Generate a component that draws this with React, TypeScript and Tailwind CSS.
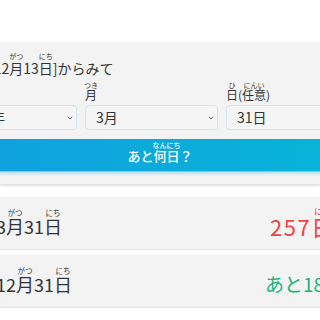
import React from "react";

function R({ base, rt, rtClass }: { base: string; rt: string; rtClass: string }) {
  return (
    <span className="relative inline-block">
      {base}
      <span className={rtClass}>{rt}</span>
    </span>
  );
}

function Chevron() {
  return (
    <svg width="6" height="4" viewBox="0 0 6 4" className="shrink-0">
      <path d="M0.8 0.8 L3 3 L5.2 0.8" fill="none" stroke="#666" strokeWidth="1" />
    </svg>
  );
}

const rtSmall =
  "absolute left-1/2 -translate-x-1/2 -top-[5px] text-[7px] leading-none whitespace-nowrap tracking-normal";
const rtLabel =
  "absolute left-1/2 -translate-x-1/2 -top-[4px] text-[7px] leading-none whitespace-nowrap";
const rtBtn =
  "absolute left-1/2 -translate-x-1/2 -top-[4px] text-[7px] leading-none whitespace-nowrap";
const rtCard =
  "absolute left-1/2 -translate-x-1/2 -top-[5px] text-[7.5px] leading-none whitespace-nowrap tracking-normal";
const rtRed =
  "absolute left-1/2 -translate-x-1/2 -top-[7px] text-[9px] leading-none whitespace-nowrap tracking-normal";

export default function App() {
  return (
    <div
      className="w-[320px] h-[320px] overflow-hidden bg-white text-[#333]"
      style={{ fontFamily: '"Noto Sans CJK JP", "Noto Sans", sans-serif' }}
    >
      <div className="h-[42px]" />
      <div className="bg-[#f3f3f3] border-b border-[#e3e3e3] shadow-[0_1px_2px_rgba(0,0,0,0.12)]">
        <div className="-ml-[49px] w-[418px] pt-[16px] pb-[12px]">
          <div className="pl-[38px] h-[20px] text-[14px] leading-[20px] whitespace-nowrap">
            [12
            <R base="月" rt="がつ" rtClass={rtSmall} />
            13
            <R base="日" rt="にち" rtClass={rtSmall} />
            ]からみて
          </div>
          <div className="mt-[7px] grid grid-cols-[126px_133px_143px] gap-x-2 gap-y-[2px]">
            <div className="h-[18px] pt-[1px] text-[12px] leading-[18px]">
              <R base="年" rt="ねん" rtClass={rtLabel} />
            </div>
            <div className="h-[18px] pt-[1px] text-[12px] leading-[18px]">
              <R base="月" rt="つき" rtClass={rtLabel} />
            </div>
            <div className="h-[18px] pt-[1px] text-[12px] leading-[18px] whitespace-nowrap">
              <R base="日" rt="ひ" rtClass={rtLabel} />(
              <R base="任意" rt="にんい" rtClass={rtLabel} />)
            </div>
            <div className="h-[25px] rounded-[4px] border border-[#cfe7f4] bg-[#f5f5f6] flex items-center justify-between pl-[8px] pr-[3px] text-[14px]">
              <span>2025年</span>
              <Chevron />
            </div>
            <div className="h-[25px] rounded-[4px] border border-[#cfe7f4] bg-[#f5f5f6] flex items-center justify-between pl-[10px] pr-[3px] text-[14px]">
              <span>3月</span>
              <Chevron />
            </div>
            <div className="h-[25px] rounded-[4px] border border-[#cfe7f4] bg-[#f5f5f6] flex items-center pl-[10px] pr-[3px] text-[14px]">
              <span>31日</span>
            </div>
          </div>
          <button className="mt-[9px] w-full h-[33px] rounded-[4px] bg-gradient-to-r from-[#129fdf] to-[#07b5d7] border-b border-[#6fd0ef] shadow-[0_2px_3px_rgba(14,165,233,0.25)] text-white text-[13px] font-medium flex items-center justify-center pt-[2px]">
            <span className="whitespace-nowrap leading-[20px]">
              あと
              <R base="何日" rt="なんにち" rtClass={rtBtn} />
              ？
            </span>
          </button>
        </div>
      </div>
      <div className="h-[12px]" />
      <div className="-ml-[20px] w-[440px] flex flex-col gap-[5px]">
        <div className="h-[53px] bg-[#f3f3f3] border-b border-[#e4e4e4] grid grid-cols-[271px_1fr] items-center pl-[16px] pt-[5px]">
          <div className="text-[18px] leading-[24px] whitespace-nowrap">
            3
            <R base="月" rt="がつ" rtClass={rtCard} />
            31
            <R base="日" rt="にち" rtClass={rtCard} />
          </div>
          <div className="pl-[3px] text-[22px] leading-[24px] tracking-[1.5px] text-[#ef4444] whitespace-nowrap">
            257
            <R base="日" rt="にち" rtClass={rtRed} />
            前
          </div>
        </div>
        <div className="h-[53px] bg-[#f3f3f3] border-b border-[#e4e4e4] grid grid-cols-[271px_1fr] items-center pl-[16px] pt-[5px]">
          <div className="text-[18px] leading-[24px] whitespace-nowrap">
            12
            <R base="月" rt="がつ" rtClass={rtCard} />
            31
            <R base="日" rt="にち" rtClass={rtCard} />
          </div>
          <div className="-ml-[2px] text-[19px] leading-[24px] text-[#16b57a] whitespace-nowrap">
            あと18
            <R base="日" rt="にち" rtClass={rtCard} />
          </div>
        </div>
      </div>
    </div>
  );
}
